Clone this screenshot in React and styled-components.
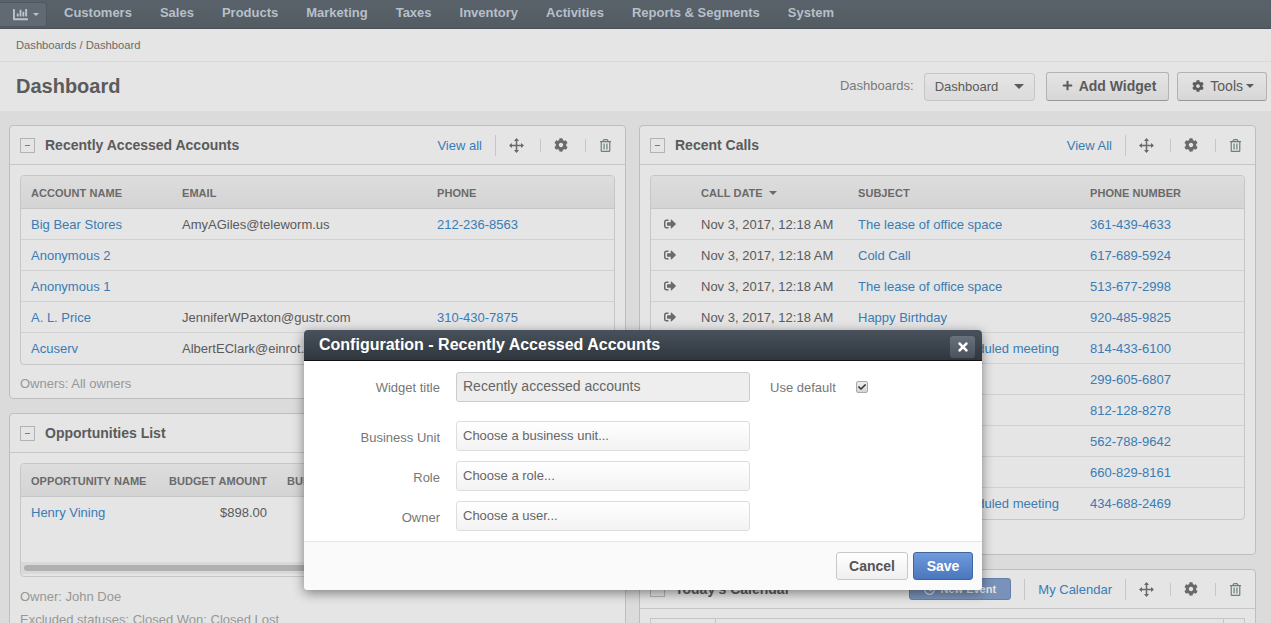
import React from 'react';
import styled, { createGlobalStyle } from 'styled-components';
import { FaChartBar, FaCheck, FaCog, FaPlus, FaRegTrashAlt, FaSignOutAlt, FaTimes, FaRegClock } from 'react-icons/fa';

const GlobalStyle = createGlobalStyle`
  html, body { margin: 0; padding: 0; height: 100%; overflow: hidden; }
  body { font-family: "Liberation Sans", Arial, sans-serif; font-size: 13px; color: #666; background: #f4f4f4; }
  * { box-sizing: border-box; }
`;

const Page = styled.div`
  position: relative;
  width: 1271px;
  height: 623px;
  overflow: hidden;
`;

const TopNav = styled.nav`
  height: 29px;
  padding-bottom: 4px;
  display: flex;
  align-items: center;
  background: linear-gradient(#646d76, #5d666f);
  border-bottom: 1px solid #525a62;
`;

const AppButton = styled.div`
  width: 47px;
  height: 25px;
  margin: 4px 17px 0 0;
  padding-left: 13px;
  display: flex;
  align-items: center;
  gap: 5px;
  color: #cfdbe6;
  background: #6d7680;
  border: 1px solid #59616a;
  border-left: 0;
  border-radius: 0 4px 4px 0;
`;

const NavItem = styled.a`
  font-weight: bold;
  font-size: 13px;
  color: #cbd6e0;
  margin-right: 28px;
`;

const Caret = styled.span`
  display: inline-block;
  width: 0;
  height: 0;
  margin-left: ${p => p.$shift || 0}px;
  border-left: ${p => p.$size || 4}px solid transparent;
  border-right: ${p => p.$size || 4}px solid transparent;
  border-top: ${p => p.$size || 4}px solid ${p => p.$color || 'currentColor'};
`;

const Crumbs = styled.div`
  height: 33px;
  padding: 0 16px;
  display: flex;
  align-items: center;
  font-size: 11.2px;
  color: #777;
  background: #fff;
  border-bottom: 1px solid #f2f2f2;
`;

const TitleBar = styled.div`
  height: 49px;
  padding: 0 4px 0 16px;
  display: flex;
  align-items: center;
  background: #fff;
`;

const PageTitle = styled.h1`
  margin: 0 0 1px;
  flex: 1;
  font-size: 20px;
  font-weight: bold;
  color: #666;
`;

const FieldLabel = styled.span`
  color: #888;
  margin: 0 10px 2px 0;
`;

const DashSelect = styled.div`
  width: 111px;
  height: 28px;
  margin-right: 11px;
  padding: 0 10px 1px;
  display: flex;
  align-items: center;
  justify-content: space-between;
  color: #666;
  background: linear-gradient(#fff, #f4f4f4);
  border: 1px solid #ddd;
  border-radius: 3px;
`;

const ToolButton = styled.div`
  height: 29px;
  margin-left: ${p => p.$gap || 0}px;
  padding: 0 ${p => p.$right || 12}px 2px ${p => p.$left || 15}px;
  display: flex;
  align-items: center;
  gap: 6px;
  font-weight: ${p => (p.$bold ? 'bold' : 'normal')};
  font-size: 14px;
  color: #666;
  background: linear-gradient(#fff, #efefef);
  border: 1px solid #c8c8c8;
  border-bottom-color: #aaa;
  border-radius: 3px;
`;

const Content = styled.div`
  display: flex;
  gap: 13px;
  padding: 14px 15px 0 9px;
`;

const Column = styled.div`
  width: 617px;
  display: flex;
  flex-direction: column;
  gap: 14px;
`;

const Widget = styled.section`
  background: #fff;
  border: 1px solid #d4d4d4;
  border-radius: 4px;
  height: ${p => p.$height}px;
  flex: none;
`;

const WidgetHead = styled.header`
  height: 39px;
  display: flex;
  align-items: center;
  padding-left: 10px;
  border-bottom: 1px solid #ddd;
`;

const Collapse = styled.span`
  width: 15px;
  height: 15px;
  margin-right: 10px;
  display: flex;
  align-items: center;
  justify-content: center;
  border: 1px solid #c8c8c8;
  background: #fff;
  &::before {
    content: '';
    width: 5px;
    height: 1px;
    background: #888;
  }
`;

const WidgetTitle = styled.h2`
  margin: 0;
  flex: 1;
  font-size: 14px;
  font-weight: bold;
  color: #666;
`;

const HeadLink = styled.a`
  color: #428bca;
  padding: 0 13px;
  height: 21px;
  line-height: 21px;
  border-left: ${p => (p.$sep ? '1px solid #ddd' : '0')};
`;

const NewEvent = styled.div`
  width: 102px;
  height: 22px;
  margin-right: 13px;
  display: flex;
  align-items: center;
  justify-content: center;
  gap: 5px;
  font-size: 11px;
  font-weight: bold;
  color: #fff;
  background: #86a3cf;
  border: 1px solid #6f8fbf;
  border-radius: 3px;
`;

const ActionCell = styled.span`
  width: ${p => p.$width || 45}px;
  height: ${p => p.$height || 13}px;
  padding-right: ${p => p.$right ?? 4}px;
  display: flex;
  align-items: center;
  justify-content: center;
  font-size: ${p => p.$size || 14}px;
  color: ${p => p.$color || '#777'};
  border-left: 1px solid #ddd;
`;

const TableBox = styled.div`
  margin: 10px 10px 0;
  border: 1px solid #ddd;
  border-radius: 4px;
  overflow: hidden;
`;

const Row = styled.div`
  display: grid;
  grid-template-columns: ${p => p.$cols};
  align-items: center;
  height: 31px;
  padding-left: 10px;
  border-bottom: ${p => (p.$plain ? '0' : '1px solid #e9e9e9')};
  white-space: nowrap;
  &:last-child { border-bottom: 0; }
`;

const HeadRow = styled(Row)`
  height: 33px;
  padding-top: 1px;
  font-size: 11px;
  font-weight: bold;
  color: #777;
  letter-spacing: 0.05px;
  background: linear-gradient(#f6f6f6, #ededed);
  border-bottom: 1px solid #ddd;
`;

const Cell = styled.span`
  display: flex;
  align-items: center;
  justify-content: ${p => (p.$right ? 'flex-end' : 'flex-start')};
  gap: 6px;
  padding-left: ${p => p.$inset || 0}px;
`;

const Link = styled.a`
  color: #428bca;
`;

const CallIcon = styled(Cell)`
  font-size: 12px;
  color: #777;
  padding-left: 3px;
`;

const Note = styled.p`
  margin: ${p => p.$top || 0}px 10px 0;
  color: #aaa;
  line-height: 23px;
`;

const ScrollSpace = styled.div`
  height: 34px;
`;

const ScrollTrack = styled.div`
  height: 12px;
  margin-bottom: 2px;
  padding: 3px;
  background: #f2f2f2;
`;

const ScrollThumb = styled.div`
  height: 6px;
  background: #c4c4c4;
  border-radius: 3px;
`;

const CalendarGrid = styled.div`
  margin: 9px 10px 0;
  height: 30px;
  display: grid;
  grid-template-columns: 64px 1fr 21px;
  border: 1px solid #ddd;
  & > span + span { border-left: 1px solid #ddd; }
`;

const Backdrop = styled.div`
  position: absolute;
  inset: 0;
  padding: 330px 0 0 304px;
  background: rgba(0, 0, 0, 0.1);
`;

const Modal = styled.div`
  width: 678px;
  height: 260px;
  display: flex;
  flex-direction: column;
  background: #fff;
  border-radius: 4px;
  box-shadow: 0 3px 12px rgba(0, 0, 0, 0.45);
  overflow: hidden;
`;

const ModalHead = styled.div`
  height: 31px;
  flex: none;
  display: flex;
  align-items: center;
  justify-content: space-between;
  padding: 0 7px 0 15px;
  background: linear-gradient(#49525c, #2f363e);
  border-bottom: 1px solid #111;
`;

const ModalTitle = styled.h3`
  margin: 0 0 1px;
  font-size: 16px;
  font-weight: bold;
  color: #fff;
`;

const CloseButton = styled.div`
  width: 25px;
  height: 22px;
  margin-top: 3px;
  display: flex;
  align-items: center;
  justify-content: center;
  font-size: 14px;
  color: #fff;
  background: linear-gradient(#68717c, #4a525b);
  border-radius: 3px;
`;

const ModalBody = styled.div`
  flex: 1;
  padding-top: 11px;
`;

const FormRow = styled.div`
  display: flex;
  align-items: center;
  height: 30px;
  margin-bottom: ${p => p.$gap ?? 10}px;
`;

const FormLabel = styled.label`
  width: 136px;
  margin-right: 16px;
  padding-top: ${p => p.$nudge || 0}px;
  text-align: right;
  color: #777;
`;

const TextField = styled.div`
  width: 294px;
  height: 30px;
  display: flex;
  align-items: center;
  padding: 0 6px ${p => (p.$readonly ? 3 : 1)}px;
  font-size: ${p => (p.$readonly ? 14 : 13)}px;
  color: #666;
  background: ${p => (p.$readonly ? '#eee' : 'linear-gradient(#fff, #f3f3f3)')};
  border: 1px solid ${p => (p.$readonly ? '#ccc' : '#ddd')};
  border-radius: 3px;
`;

const DefaultLabel = styled.span`
  margin: 0 20px 0 20px;
  color: #777;
`;

const CheckBox = styled.span`
  width: 12px;
  height: 12px;
  display: flex;
  align-items: center;
  justify-content: center;
  font-size: 8px;
  color: #333;
  background: linear-gradient(#eee, #d4d4d4);
  border: 1px solid #aaa;
  border-radius: 2px;
`;

const ModalFoot = styled.div`
  height: 49px;
  flex: none;
  display: flex;
  align-items: flex-start;
  justify-content: flex-end;
  gap: 5px;
  padding: 10px 9px 0 0;
  background: #fafafa;
  border-top: 1px solid #e5e5e5;
`;

const FootButton = styled.div`
  width: ${p => p.$width}px;
  height: 28px;
  display: flex;
  align-items: center;
  justify-content: center;
  font-size: 14px;
  font-weight: bold;
  color: ${p => (p.$primary ? '#fff' : '#555')};
  background: ${p => (p.$primary ? 'linear-gradient(#6f9bdc, #4a76bd)' : 'linear-gradient(#fff, #efefef)')};
  border: 1px solid ${p => (p.$primary ? '#3f659f' : '#c8c8c8')};
  border-radius: 3px;
`;

const navItems = ['Customers', 'Sales', 'Products', 'Marketing', 'Taxes', 'Inventory', 'Activities', 'Reports & Segments', 'System'];

const accounts = [
  ['Big Bear Stores', 'AmyAGiles@teleworm.us', '212-236-8563'],
  ['Anonymous 2', '', ''],
  ['Anonymous 1', '', ''],
  ['A. L. Price', 'JenniferWPaxton@gustr.com', '310-430-7875'],
  ['Acuserv', 'AlbertEClark@einrot.com', '415-555-0142'],
];

const calls = [
  ['The lease of office space', '361-439-4633'],
  ['Cold Call', '617-689-5924'],
  ['The lease of office space', '513-677-2998'],
  ['Happy Birthday', '920-485-9825'],
  ['Confirmation of scheduled meeting', '814-433-6100'],
  ['Cold Call', '299-605-6807'],
  ['Happy Birthday', '812-128-8278'],
  ['Cold Call', '562-788-9642'],
  ['Happy Birthday', '660-829-8161'],
  ['Confirmation of scheduled meeting', '434-688-2469'],
];

// thin four way arrow, the icon packages only have heavy ones
const MoveIcon = () => (
  <svg width="15" height="15" viewBox="0 0 15 15" fill="currentColor">
    <rect x="1" y="6.75" width="13" height="1.5" />
    <rect x="6.75" y="1" width="1.5" height="13" />
    <path d="M7.5 0 10 3H5zM7.5 15 5 12h5zM0 7.5 3 5v5zM15 7.5 12 10V5z" />
  </svg>
);

const WidgetActions = () => (
  <>
    <ActionCell $height={21}><MoveIcon /></ActionCell>
    <ActionCell><FaCog /></ActionCell>
    <ActionCell $width={40} $right={0} $size={13} $color="#74957f"><FaRegTrashAlt /></ActionCell>
  </>
);

const ACCOUNT_COLS = '151px 255px 1fr';
const CALL_COLS = '40px 157px 232px 1fr';
const OPP_COLS = '137px 99px 1fr';

const App = () => {
  return (
    <Page>
      <GlobalStyle />
      <TopNav>
        <AppButton><FaChartBar size={15} /><Caret $size={3} /></AppButton>
        {navItems.map((item) => <NavItem key={item}>{item}</NavItem>)}
      </TopNav>
      <Crumbs>Dashboards / Dashboard</Crumbs>
      <TitleBar>
        <PageTitle>Dashboard</PageTitle>
        <FieldLabel>Dashboards:</FieldLabel>
        <DashSelect>Dashboard <Caret $size={5} $color="#666" /></DashSelect>
        <ToolButton $bold><FaPlus size={11} /> Add Widget</ToolButton>
        <ToolButton $gap={8} $left={14}><FaCog size={12} /> Tools <Caret $size={4} $shift={-3} /></ToolButton>
      </TitleBar>
      <Content>
        <Column>
          <Widget $height={274}>
            <WidgetHead>
              <Collapse />
              <WidgetTitle>Recently Accessed Accounts</WidgetTitle>
              <HeadLink>View all</HeadLink>
              <WidgetActions />
            </WidgetHead>
            <TableBox>
              <HeadRow $cols={ACCOUNT_COLS}>
                <Cell>ACCOUNT NAME</Cell><Cell>EMAIL</Cell><Cell>PHONE</Cell>
              </HeadRow>
              {accounts.map(([name, email, phone]) => (
                <Row key={name} $cols={ACCOUNT_COLS}>
                  <Link>{name}</Link><Cell>{email}</Cell><Link>{phone}</Link>
                </Row>
              ))}
            </TableBox>
            <Note $top={7}>Owners: All owners</Note>
          </Widget>
          <Widget $height={300}>
            <WidgetHead>
              <Collapse />
              <WidgetTitle>Opportunities List</WidgetTitle>
              <HeadLink>View all</HeadLink>
              <WidgetActions />
            </WidgetHead>
            <TableBox>
              <HeadRow $cols={OPP_COLS}>
                <Cell>OPPORTUNITY NAME</Cell><Cell $right>BUDGET AMOUNT</Cell><Cell $inset={20}>BUDGET AMOUNT</Cell>
              </HeadRow>
              <Row $plain $cols={OPP_COLS}>
                <Link>Henry Vining</Link><Cell $right>$898.00</Cell>
              </Row>
              <ScrollSpace />
              <ScrollTrack><ScrollThumb /></ScrollTrack>
            </TableBox>
            <Note $top={8}>Owner: John Doe</Note>
            <Note>Excluded statuses: Closed Won; Closed Lost</Note>
          </Widget>
        </Column>
        <Column>
          <Widget $height={430}>
            <WidgetHead>
              <Collapse />
              <WidgetTitle>Recent Calls</WidgetTitle>
              <HeadLink>View All</HeadLink>
              <WidgetActions />
            </WidgetHead>
            <TableBox>
              <HeadRow $cols={CALL_COLS}>
                <Cell />
                <Cell>CALL DATE <Caret $size={4} /></Cell>
                <Cell>SUBJECT</Cell>
                <Cell>PHONE NUMBER</Cell>
              </HeadRow>
              {calls.map(([subject, phone]) => (
                <Row key={phone} $cols={CALL_COLS}>
                  <CallIcon><FaSignOutAlt /></CallIcon>
                  <Cell>Nov 3, 2017, 12:18 AM</Cell>
                  <Link>{subject}</Link>
                  <Link>{phone}</Link>
                </Row>
              ))}
            </TableBox>
          </Widget>
          <Widget $height={100}>
            <WidgetHead>
              <Collapse />
              <WidgetTitle>Today's Calendar</WidgetTitle>
              <NewEvent><FaRegClock /> New Event</NewEvent>
              <HeadLink $sep>My Calendar</HeadLink>
              <WidgetActions />
            </WidgetHead>
            <CalendarGrid><span /><span /><span /></CalendarGrid>
          </Widget>
        </Column>
      </Content>
      <Backdrop>
        <Modal>
          <ModalHead>
            <ModalTitle>Configuration - Recently Accessed Accounts</ModalTitle>
            <CloseButton><FaTimes /></CloseButton>
          </ModalHead>
          <ModalBody>
            <FormRow $gap={19}>
              <FormLabel>Widget title</FormLabel>
              <TextField $readonly>Recently accessed accounts</TextField>
              <DefaultLabel>Use default</DefaultLabel>
              <CheckBox><FaCheck /></CheckBox>
            </FormRow>
            <FormRow>
              <FormLabel $nudge={2}>Business Unit</FormLabel>
              <TextField>Choose a business unit...</TextField>
            </FormRow>
            <FormRow>
              <FormLabel $nudge={2}>Role</FormLabel>
              <TextField>Choose a role...</TextField>
            </FormRow>
            <FormRow>
              <FormLabel $nudge={2}>Owner</FormLabel>
              <TextField>Choose a user...</TextField>
            </FormRow>
          </ModalBody>
          <ModalFoot>
            <FootButton $width={72}>Cancel</FootButton>
            <FootButton $width={60} $primary>Save</FootButton>
          </ModalFoot>
        </Modal>
      </Backdrop>
    </Page>
  );
};

export default App;
